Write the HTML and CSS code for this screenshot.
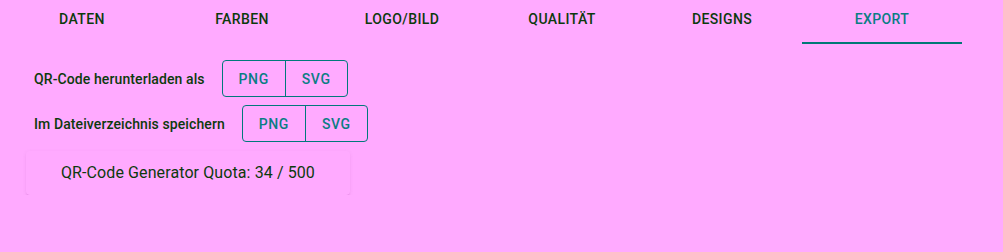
FILE: index.html
```html
<!DOCTYPE html>
<html lang="de">
<head>
    <meta charset="UTF-8">
    <title>QR-Code Export</title>
    <link rel="stylesheet" href="styles.css">
</head>
<body>
    <nav class="tabs">
        <div class="tab">Daten</div>
        <div class="tab">Farben</div>
        <div class="tab">Logo/Bild</div>
        <div class="tab">Qualität</div>
        <div class="tab">Designs</div>
        <div class="tab active">Export</div>
    </nav>

    <main class="panel">
        <div class="row">
            <span class="label">QR-Code herunterladen als</span>
            <div class="btn-group">
                <button class="btn">PNG</button>
                <button class="btn">SVG</button>
            </div>
        </div>
        <div class="row">
            <span class="label">Im Dateiverzeichnis speichern</span>
            <div class="btn-group">
                <button class="btn">PNG</button>
                <button class="btn">SVG</button>
            </div>
        </div>
        <div class="quota">QR-Code Generator Quota: 34 / 500</div>
    </main>
</body>
</html>
```

FILE: styles.css
```css
body {
    margin: 0;
    background-color: #ffaaff;
    font-family: Roboto, "Noto Sans", sans-serif;
    color: #0c3a0c;
}
.tabs {
    display: flex;
    padding-left: 2px;
}
.tab {
    width: 160px;
    box-sizing: border-box;
    height: 44px;
    padding-top: 11px;
    text-align: center;
    font-size: 14px;
    font-weight: 500;
    letter-spacing: 0.4px;
    text-transform: uppercase;
    border-bottom: 2px solid transparent;
}
.tab.active {
    color: #0a7d84;
    border-bottom-color: #007876;
}
.panel {
    padding: 16px 26px 0;
}
.row {
    display: flex;
    align-items: center;
    padding-left: 8px;
    margin-bottom: 8px;
}
.label {
    font-size: 14px;
    font-weight: 500;
    letter-spacing: 0.1px;
    margin-right: 17px;
}
.btn-group {
    display: flex;
    border: 1px solid #00797b;
    border-radius: 4px;
}
.btn {
    width: 62px;
    height: 35px;
    border: none;
    background: none;
    font-family: Roboto, sans-serif;
    font-size: 14px;
    font-weight: 500;
    letter-spacing: 0.6px;
    color: #0a7d84;
    padding: 0;
}
.btn + .btn {
    border-left: 1px solid #00797b;
}
.quota {
    display: inline-block;
    margin-top: 1px;
    padding: 12px 35px 13px;
    font-size: 16px;
    letter-spacing: 0.1px;
    border-radius: 4px;
    box-shadow: 0 2px 2px -1px rgba(120, 0, 120, 0.25), 0 1px 4px rgba(120, 0, 120, 0.07);
}
```
